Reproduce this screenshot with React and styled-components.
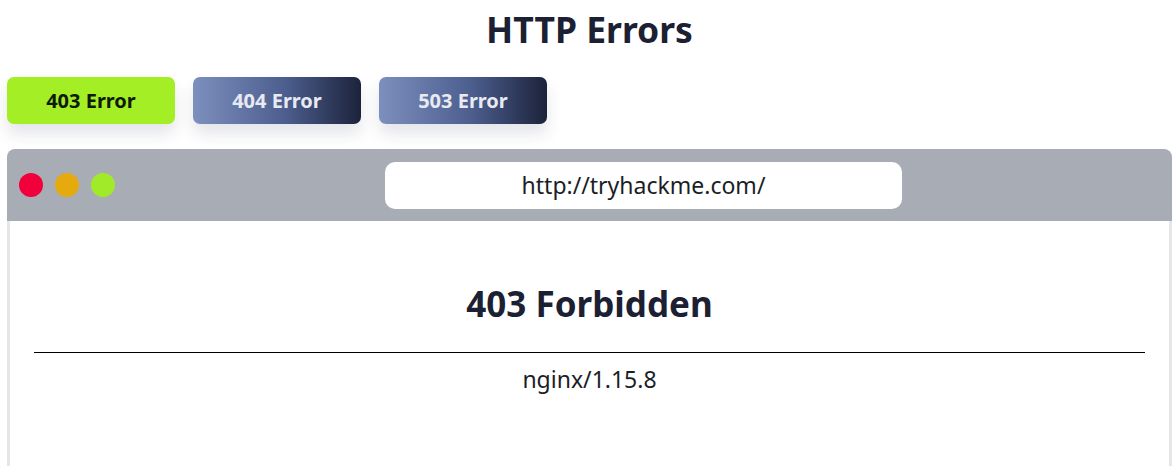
import React from "react";
import styled, { createGlobalStyle } from "styled-components";

const Global = createGlobalStyle`
  html, body { margin: 0; padding: 0; background: #ffffff; }
  body { font-family: "Noto Sans", "Open Sans", sans-serif; color: #1b2032; }
`;

const Page = styled.div`
  padding: 0 1px 0 7px;
  display: flex;
  flex-direction: column;
`;

const Title = styled.h1`
  margin: 7px 0 0;
  text-align: center;
  font-size: 35.5px;
  line-height: 44px;
  font-weight: 700;
  color: #1b2032;
`;

const Tabs = styled.div`
  display: flex;
  gap: 18px;
  margin-top: 26px;
`;

const Tab = styled.button`
  width: 168px;
  height: 47px;
  border: none;
  border-radius: 7px;
  font-family: inherit;
  font-size: 20px;
  font-weight: 700;
  cursor: pointer;
  box-shadow: 0 10px 16px rgba(30, 40, 70, 0.12);
  color: ${(p) => (p.$active ? "#0e1a0a" : "#e8eaf2")};
  background: ${(p) =>
    p.$active
      ? "#a3ee25"
      : "linear-gradient(to right, #7d8fbd 0%, #4c5e8e 55%, #1c233b 100%)"};
`;

const Window = styled.div`
  margin-top: 25px;
  border-radius: 8px 8px 0 0;
  overflow: hidden;
`;

const Header = styled.div`
  height: 72px;
  background: #a8acb4;
  display: flex;
  align-items: center;
  padding: 0 0 0 12px;
`;

const Dots = styled.div`
  display: flex;
  gap: 12px;
`;

const Dot = styled.span`
  width: 24px;
  height: 24px;
  border-radius: 50%;
  background: ${(p) => p.$color};
`;

const Url = styled.div`
  margin: 0 auto;
  width: 517px;
  height: 47px;
  border-radius: 10px;
  background: #ffffff;
  display: flex;
  align-items: center;
  justify-content: center;
  font-size: 23px;
  color: #1b1e26;
`;

const Body = styled.div`
  border-left: 3px solid #e6e6e8;
  border-right: 3px solid #e6e6e8;
  padding: 61px 24px 80px;
  display: flex;
  flex-direction: column;
  align-items: center;
`;

const Heading = styled.h2`
  margin: 0;
  font-size: 35px;
  line-height: 44px;
  font-weight: 700;
  color: #1b2032;
`;

const Rule = styled.hr`
  align-self: stretch;
  margin: 26px 0 0;
  border: none;
  border-top: 1px solid #000;
`;

const Server = styled.div`
  margin-top: 11px;
  font-size: 23px;
  line-height: 30px;
  color: #1b1e26;
`;

export default function App() {
  return (
    <>
      <Global />
      <Page>
        <Title>HTTP Errors</Title>
        <Tabs>
          <Tab $active>403 Error</Tab>
          <Tab>404 Error</Tab>
          <Tab>503 Error</Tab>
        </Tabs>
        <Window>
          <Header>
            <Dots>
              <Dot $color="#f2003c" />
              <Dot $color="#e5aa0e" />
              <Dot $color="#a1ea2a" />
            </Dots>
            <Url>http://tryhackme.com/</Url>
          </Header>
          <Body>
            <Heading>403 Forbidden</Heading>
            <Rule />
            <Server>nginx/1.15.8</Server>
          </Body>
        </Window>
      </Page>
    </>
  );
}
